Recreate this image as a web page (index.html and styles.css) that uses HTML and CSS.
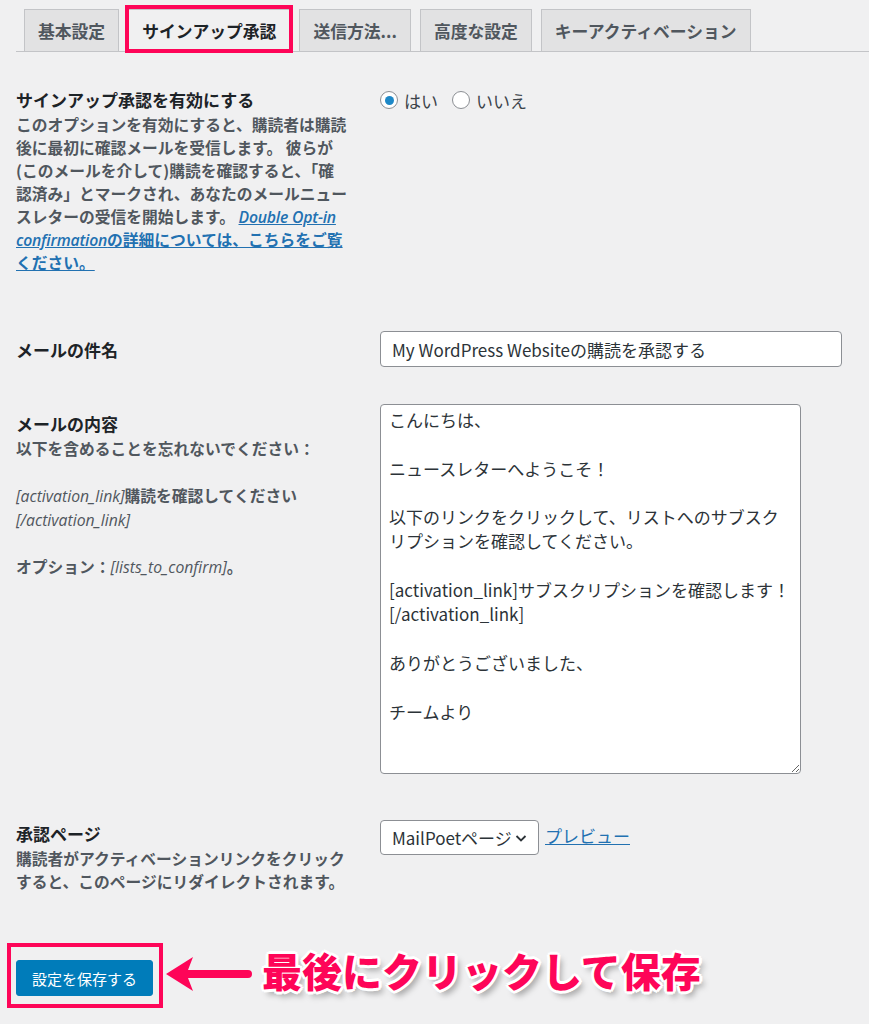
FILE: index.html
```html
<!DOCTYPE html>
<html lang="ja">
<head>
<meta charset="utf-8">
<title>MailPoet 設定</title>
<link rel="stylesheet" href="styles.css">
</head>
<body>
<div class="page">
  <nav class="tabs">
    <div class="tab">基本設定</div>
    <div class="tab active">サインアップ承認</div>
    <div class="tab">送信方法...</div>
    <div class="tab">高度な設定</div>
    <div class="tab">キーアクティベーション</div>
  </nav>

  <div class="row r1">
    <div class="th">
      <div class="label">サインアップ承認を有効にする</div>
      <div class="desc">このオプションを有効にすると、購読者は購読後に最初に確認メールを受信します。 彼らが(このメールを介して)購読を確認すると、「確認済み」とマークされ、あなたのメールニュースレターの受信を開始します。 <a class="link" href="#"><em>Double Opt-in confirmation</em>の詳細については、こちらをご覧ください。</a></div>
    </div>
    <div class="td">
      <div class="radios">
        <span class="radio checked"></span><span class="rlabel">はい</span>
        <span class="radio second"></span><span class="rlabel">いいえ</span>
      </div>
    </div>
  </div>

  <div class="row r2">
    <div class="th">
      <div class="label pad6">メールの件名</div>
    </div>
    <div class="td">
      <input class="text-input" type="text" value="My WordPress Websiteの購読を承認する">
    </div>
  </div>

  <div class="row r3">
    <div class="th">
      <div class="label pad7">メールの内容</div>
      <div class="desc desc3">以下を含めることを忘れないでください：<br><br><em>[activation_link]</em>購読を確認してください<br><em>[/activation_link]</em><br><br>オプション：<em>[lists_to_confirm]</em>。</div>
    </div>
    <div class="td">
      <textarea class="body-text">こんにちは、

ニュースレターへようこそ！

以下のリンクをクリックして、リストへのサブスクリプションを確認してください。

[activation_link]サブスクリプションを確認します！
[/activation_link]

ありがとうございました、

チームより</textarea>
    </div>
  </div>

  <div class="row r4">
    <div class="th">
      <div class="label pad1">承認ページ</div>
      <div class="desc">購読者がアクティベーションリンクをクリックすると、このページにリダイレクトされます。</div>
    </div>
    <div class="td">
      <div class="select-line">
        <div class="select"><span>MailPoetページ</span><svg width="16" height="16" viewBox="0 0 16 16"><path d="M3.5 6 L8 10.5 L12.5 6" fill="none" stroke="#2c3338" stroke-width="1.8"/></svg></div>
        <a class="preview" href="#">プレビュー</a>
      </div>
    </div>
  </div>

  <div class="save-row">
    <button class="btn">設定を保存する</button>
    <svg class="arrow" width="86" height="34" viewBox="0 0 86 34"><path d="M0 17 L27 0 L22 13 L82 13 Q86 13 86 17 Q86 21 82 21 L22 21 L27 34 Z" fill="#fe0558"/></svg>
    <div class="callout">最後にクリックして保存</div>
  </div>
</div>
</body>
</html>
```
FILE: styles.css
```css
* { box-sizing: border-box; }

body {
  margin: 0;
  background: #f0f0f1;
  font-family: "Noto Sans CJK JP", sans-serif;
  color: #1d2327;
}

.page {
  padding-left: 16px;
  padding-bottom: 40px;
}

.tabs {
  display: flex;
  align-items: flex-end;
  padding-top: 9px;
  padding-left: 8px;
  border-bottom: 1px solid #c3c4c7;
}

.tab {
  height: 42px;
  padding: 0 13px;
  margin-right: 9px;
  border: 1px solid #c3c4c7;
  border-bottom: none;
  background: #e2e2e3;
  font-size: 16.8px;
  font-weight: 700;
  color: #50575e;
  display: flex;
  align-items: center;
}

.tab.active {
  position: relative;
  background: #f0f0f1;
  color: #1d2327;
  height: 43px;
  margin-bottom: -1px;
}

.tab.active::after {
  content: "";
  position: absolute;
  left: -4px;
  right: -4px;
  top: -5px;
  bottom: -1px;
  border: 4px solid #fe0558;
}

.row {
  display: grid;
  grid-template-columns: 364px 1fr;
  align-items: start;
}

.r1 { margin-top: 35px; }
.r2 { margin-top: 57px; }
.r3 { margin-top: 37px; }
.r4 { margin-top: 46px; }

.th { width: 332px; }

.label {
  font-size: 17px;
  font-weight: 700;
  line-height: 26px;
  color: #1d2327;
}

.pad6 { padding-top: 6px; }
.pad7 { padding-top: 7px; }
.pad1 { padding-top: 1px; }

.desc {
  font-size: 15.75px;
  font-weight: 700;
  line-height: 23px;
  color: #50575e;
}

.desc3 { line-height: 23.5px; }

.desc em {
  font-family: "Open Sans", "Noto Sans CJK JP", sans-serif;
  font-style: italic;
  font-weight: 400;
  line-height: 1;
}

.link {
  color: #2271b1;
  text-decoration: underline;
}

.link em {
  font-weight: 600;
  letter-spacing: -0.2px;
}

.radios {
  display: flex;
  align-items: center;
  height: 26px;
  font-size: 17px;
  color: #3c434a;
}

.radio {
  width: 18px;
  height: 18px;
  border: 1px solid #8c8f94;
  border-radius: 50%;
  background: #fff;
  margin-right: 6px;
  display: flex;
  align-items: center;
  justify-content: center;
}

.radio.checked::before {
  content: "";
  width: 9px;
  height: 9px;
  border-radius: 50%;
  background: #1e88c7;
}

.radio.second { margin-left: 14px; }

.text-input {
  display: block;
  width: 462px;
  height: 36px;
  border: 1px solid #8c8f94;
  border-radius: 4px;
  background: #fff;
  padding: 0 11px;
  font-family: "Noto Sans CJK JP", sans-serif;
  font-size: 17px;
  color: #2c3338;
}

.body-text {
  display: block;
  width: 421px;
  height: 370px;
  border: 1px solid #8c8f94;
  border-radius: 4px;
  background: #fff;
  padding: 3px 6px 3px 8px;
  font-family: "Noto Sans CJK JP", sans-serif;
  font-size: 17px;
  line-height: 24.3px;
  color: #2c3338;
  resize: vertical;
  overflow: hidden;
}

.select-line {
  display: flex;
  align-items: center;
}

.select {
  width: 159px;
  height: 35px;
  border: 1px solid #8c8f94;
  border-radius: 4px;
  background: #fff;
  padding: 0 9px 0 11px;
  display: flex;
  align-items: center;
  justify-content: space-between;
  font-size: 17px;
  color: #2c3338;
}

.preview {
  margin-left: 6px;
  margin-top: -4px;
  font-size: 17px;
  color: #2271b1;
  text-decoration: underline;
}

.save-row {
  display: flex;
  align-items: flex-start;
  margin-top: 67px;
}

.btn {
  position: relative;
  height: 36px;
  padding: 0 15px;
  background: #007cba;
  border: 1px solid #007cba;
  border-radius: 3px;
  color: #fff;
  font-family: "Noto Sans CJK JP", sans-serif;
  font-size: 15px;
}

.btn::after {
  content: "";
  position: absolute;
  left: -10px;
  right: -11px;
  top: -18px;
  bottom: -13px;
  border: 4px solid #fe0558;
}

.arrow {
  margin-left: 13px;
  margin-top: -3px;
}

.callout {
  margin-left: 10px;
  margin-top: -14px;
  font-size: 40px;
  font-weight: 900;
  line-height: 48px;
  color: #fe0558;
  text-shadow:
    3px 0 0 #fff, -3px 0 0 #fff, 0 3px 0 #fff, 0 -3px 0 #fff,
    2px 2px 0 #fff, -2px 2px 0 #fff, 2px -2px 0 #fff, -2px -2px 0 #fff,
    4px 5px 6px rgba(0, 0, 0, 0.35);
}
```
